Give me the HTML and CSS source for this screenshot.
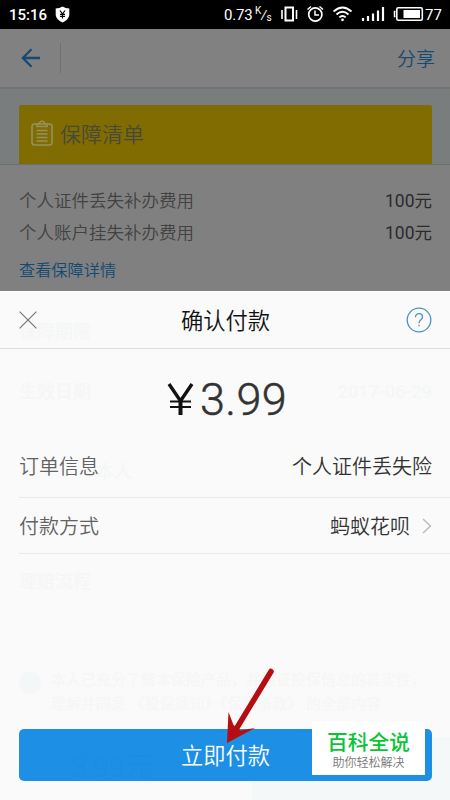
FILE: index.html
```html
<!DOCTYPE html>
<html lang="zh-CN">
<head>
<meta charset="utf-8">
<title>确认付款</title>
<link rel="stylesheet" href="styles.css">
</head>
<body>
<div class="screen">
  <div class="status">
    <span class="time">15:16</span>
    <svg class="shield" width="15" height="17" viewBox="0 0 15 17"><path d="M7.5 0.5 Q10.5 2.6 14.3 2.6 V9 Q13.8 13.5 7.5 16.5 Q1.2 13.5 .7 9 V2.6 Q4.500 2.6 7.500 .5Z" fill="#fff"/><path d="M5 4.500 7.500 8 10 4.500M7.500 8V12.500M5 8.300H10M5 10.300H10" fill="none" stroke="#000" stroke-width="1.200"/></svg>
    <span class="speed">0.73</span><span class="unit"><sup>K</sup><i>/</i><sub>s</sub></span>
    <svg class="icons" width="147" height="20" viewBox="280 5 147 20" fill="none" stroke="#fff">
      <path d="M282 10V19M296.500 10V19" stroke-width="1.600"/><rect x="285.500" y="7.500" width="7.500" height="13" stroke-width="2"/>
      <circle cx="315.300" cy="14.500" r="6.600" stroke-width="1.700"/><path d="M315 10.500V15H319M307.500 9.500 311 6.500M323 9.500 319.500 6.500" stroke-width="1.500"/>
      <path d="M333.500 11.500Q342.500 3.500 351.500 11.500M336.500 14.500Q342.500 9 348.500 14.500M339.300 17.400Q342.500 14.500 345.700 17.400" stroke-width="1.800"/><circle cx="342.500" cy="19.800" r="1.400" fill="#fff" stroke="none"/>
      <path d="M363 18V21M368 16V21M373 13.500V21M378 10.500V21M383 7V21" stroke-width="2.200"/>
      <rect x="396.800" y="7.800" width="25.500" height="12.500" rx="1.500" stroke-width="1.600"/><path d="M395.500 11.500H394.500V16.500H395.500" stroke-width="1.500"/><rect x="403.500" y="10" width="16.500" height="8" fill="#fff" stroke="none"/>
    </svg>
    <span class="level">77</span>
  </div>
  <div class="nav">
    <svg width="20" height="20" viewBox="0 0 20 20"><path d="M10.500 1.200 1.800 10 10.500 18.800M2 10H19" fill="none" stroke="#164a73" stroke-width="2.300"/></svg>
    <span class="divider"></span>
    <span class="share">分享</span>
  </div>
  <div class="banner-wrap">
    <div class="banner">
      <svg width="22" height="26" viewBox="0 0 22 26" fill="none" stroke="#96915f" stroke-width="1.600"><rect x="1" y="4" width="20" height="21" rx="2.500"/><path d="M6 6.500V4.500Q6 3.500 8 3.500Q11-1.500 14 3.500Q16 3.500 16 4.500V6.500ZM5.500 10.500H16.500M5.500 14H16.500M5.500 17.500H16.500M5.500 21H16.500"/></svg>
      <span>保障清单</span>
    </div>
  </div>
  <div class="benefits">
    <div class="benefit"><span>个人证件丢失补办费用</span><b>100元</b></div>
    <div class="benefit"><span>个人账户挂失补办费用</span><b>100元</b></div>
    <div class="details">查看保障详情</div>
  </div>
  <div class="sheet">
    <div class="underlay">
      <span class="g g-term">保障期限</span>
      <span class="g g-start">生效日期</span>
      <span class="g g-date">2017-06-29</span>
      <span class="g g-person">本人</span>
      <span class="g g-claim">理赔流程</span>
      <span class="g g-dot"></span>
      <span class="g g-agree">本人已充分了解本保险产品，并保证投保信息的真实性，<br>理解并同意 《投保须知》《保险条款》 的全部内容</span>
      <span class="g g-corner"></span>
    </div>
    <div class="title-row">
      <svg width="18" height="18" viewBox="0 0 18 18"><path d="M.6.600 17.400 17.400M17.400.600.600 17.400" stroke="#777" stroke-width="1.250"/></svg>
      <h1>确认付款</h1>
      <svg width="26" height="26" viewBox="0 0 26 26" fill="none" stroke="#4993c4"><circle cx="13" cy="13" r="11.800" stroke-width="1.300"/><path d="M9.500 10.300Q9.500 6.700 13 6.700Q16.500 6.700 16.500 10Q16.500 11.700 14.700 13Q13 14.300 13 16.300M13 17.800V19.300" stroke-width="1.300"/></svg>
    </div>
    <div class="amount"><svg width="27" height="33" viewBox="0 0 27 33" fill="none" stroke="#111"><path d="M2 1 13.500 18 25 1" stroke-width="3.400"/><path d="M13.500 16V32" stroke-width="4"/><path d="M3 18.500H24M3 24H24" stroke-width="2.200"/></svg><span>3.99</span></div>
    <div class="row order"><span>订单信息</span><b>个人证件丢失险</b></div>
    <div class="row method"><span>付款方式</span><b>蚂蚁花呗</b><svg width="10" height="16" viewBox="0 0 10 16"><path d="M1 1 8.500 8 1 15" fill="none" stroke="#bbb" stroke-width="1.500"/></svg></div>
    <div class="pay"><span class="pay-ghost">3.99元</span><span class="pay-label">立即付款</span></div>
  </div>
  <svg class="pointer" width="50" height="76" viewBox="223 666 50 76"><path d="M270 670.500 234 730" stroke="#b50d12" stroke-width="5.500" stroke-linecap="round"/><path d="M226 742 227.500 711 232.500 724 239.500 729.500 254 727Z" fill="#b50d12"/></svg>
  <div class="brand"><strong>百科全说</strong><small>助你轻松解决</small></div>
</div>
</body>
</html>
```
FILE: styles.css
```css
* { box-sizing: border-box; }
body { margin: 0; font-family: Roboto, "Noto Sans CJK SC", sans-serif; font-weight: 350; }
svg { display: block; flex: none; }
b { font-weight: inherit; }
.screen { position: relative; width: 450px; height: 800px; overflow: hidden; background: #808080; display: flex; flex-direction: column; }
.status { height: 29px; flex: none; background: #000; color: #fff; display: flex; align-items: center; padding: 0 8px 0 9px; font-size: 16px; font-weight: 400; white-space: nowrap; }
.time { width: 46px; font-weight: 500; font-size: 15px; }
.speed { margin-left: 154px; width: 31px; font-size: 15px; letter-spacing: -.2px; }
.unit { display: flex; font-size: 11px; line-height: 12px; width: 25px; align-items: center; }
.unit sup, .unit sub { font-size: 10px; vertical-align: baseline; }
.unit sup { transform: translateY(-4px); }
.unit sub { transform: translateY(3px); }
.unit i { font-size: 13px; }
.level { font-size: 15px; margin-left: -2px; }
.nav { height: 60px; flex: none; display: flex; align-items: center; padding: 0 15px 1px 21px; border-bottom: 2px solid #747474; background: #818181; }
.divider { width: 1px; height: 30px; margin-left: 19px; background: #707070; }
.share { margin-left: auto; font-size: 19px; color: #164a73; }
.banner-wrap { height: 76px; flex: none; padding: 16px 18px 0 19px; background: #7a7d7e; border-bottom: 1px solid #6f6f6f; }
.banner { height: 59px; border-radius: 2px 2px 0 0; background: #806c00; display: flex; align-items: center; padding: 0 0 3px 12px; gap: 7px; font-size: 21px; color: #494939; }
.benefits { height: 126px; flex: none; padding: 18px 18px 0 19px; }
.benefit { display: flex; justify-content: space-between; align-items: center; height: 32.500px; font-size: 17.500px; color: #424242; }
.benefit b { color: #2b2b2b; font-weight: 400; }
.details { font-size: 16.200px; line-height: 24px; margin-top: 11px; color: #124a73; }
.sheet { position: relative; flex: 1; background: #fafafa; border-top: 1px solid #fff; padding-bottom: 19px; display: flex; flex-direction: column; }
.title-row { position: relative; height: 57px; flex: none; display: flex; align-items: center; justify-content: space-between; padding: 0 18px 1px 19px; border-bottom: 1px solid #dedede; }
h1 { margin: -1px 0 0 8px; font-size: 22.300px; font-weight: 350; color: #111; }
.amount { height: 86px; flex: none; display: flex; align-items: center; justify-content: center; gap: 6px; padding: 14px 0 0 4px; font-size: 45px; letter-spacing: .3px; color: #333; -webkit-text-stroke: .5px #333; }
.row { position: relative; margin-left: 19px; padding: 0 18px 0 0; display: flex; align-items: center; font-size: 20px; color: #636363; border-bottom: 1px solid #e9e9e9; flex: none; }
.row b { margin-left: auto; color: #333; }
.order { height: 63px; padding-bottom: 2px; }
.method { height: 56px; }
.method svg { margin-left: 12px; }
.pay { position: relative; margin: auto 18px 0 19px; height: 52px; border-radius: 5px; background: #1d90e6; color: #fff; display: flex; align-items: center; justify-content: center; font-size: 22.300px; padding-bottom: 2px; }
.pay-label { position: relative; }
.pay-ghost { position: absolute; left: 52px; top: 25px; font-size: 28px; line-height: 28px; color: #1c8de3; }
.underlay { position: absolute; inset: 0; overflow: hidden; pointer-events: none; }
.g { position: absolute; color: #f5f6f6; font-size: 18px; font-weight: 500; line-height: 24px; white-space: nowrap; }
.g-term { left: 19px; top: 28px; }
.g-start { left: 19px; top: 88px; }
.g-date { right: 18px; top: 88px; }
.g-person { left: 96px; top: 168px; }
.g-claim { left: 19px; top: 278px; }
.g-dot { left: 19px; top: 380px; width: 22px; height: 22px; border-radius: 50%; background: #f3f7f8; }
.g-agree { left: 51px; top: 376px; font-size: 15px; }
.g-corner { right: 0; bottom: 0; width: 198px; height: 63px; background: #f5f8f9; }
.pointer { position: absolute; left: 224px; top: 667px; }
.brand { position: absolute; left: 312px; top: 721px; width: 113px; height: 54px; background: #fff; display: flex; flex-direction: column; align-items: center; padding-top: 9px; }
.brand strong { font-size: 20.700px; line-height: 26px; font-weight: 500; color: #08c536; }
.brand small { font-size: 12px; line-height: 14px; font-weight: 350; color: #777; }
```
